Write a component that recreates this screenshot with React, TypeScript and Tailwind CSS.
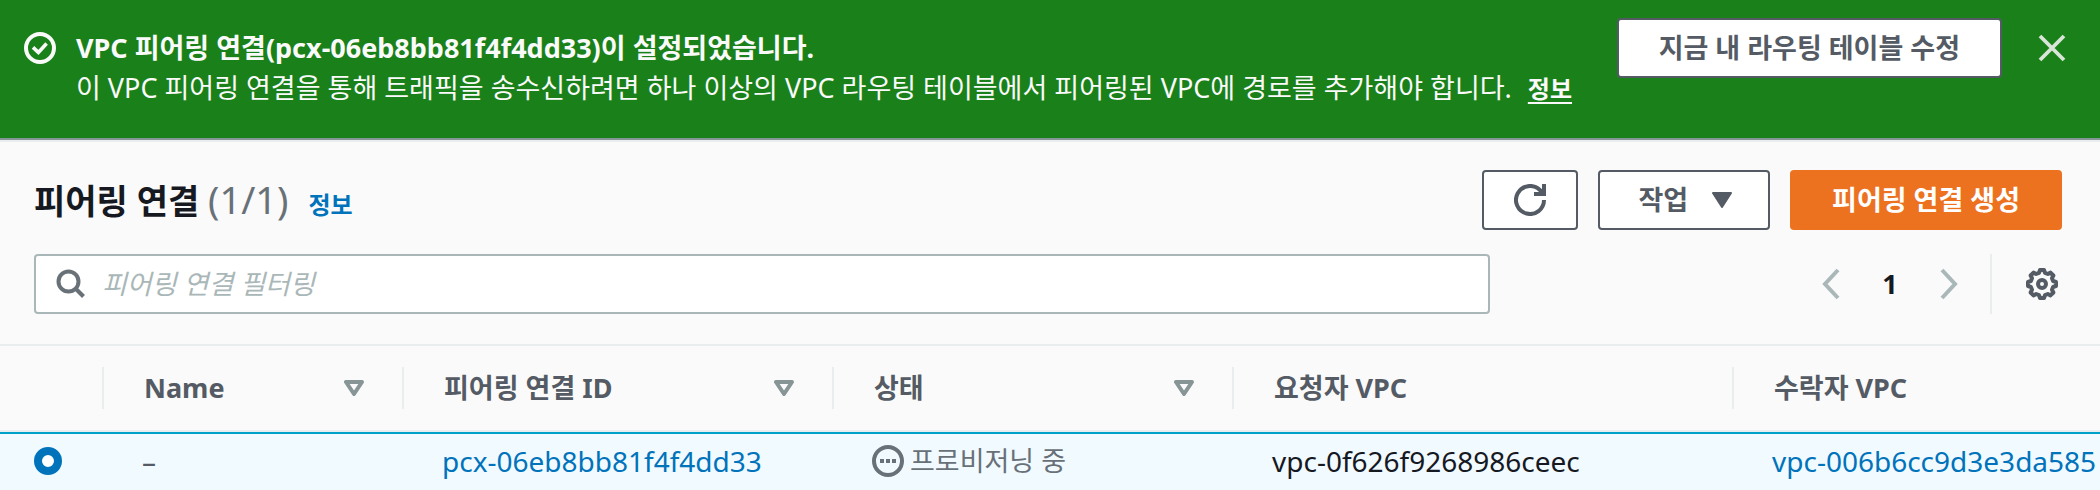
import { useState } from 'react';

const columns = [
    { label: 'Name', sortable: true },
    { label: '피어링 연결 ID', sortable: true },
    { label: '상태', sortable: true },
    { label: '요청자 VPC', sortable: false },
    { label: '수락자 VPC', sortable: false },
];

const peerings = [
    {
        id: 'pcx-06eb8bb81f4f4dd33',
        name: '–',
        status: '프로비저닝 중',
        requester: 'vpc-0f626f9268986ceec',
        accepter: 'vpc-006b6cc9d3e3da585',
    },
];

function CheckCircleIcon() {
    return (
        <svg viewBox="0 0 16 16" className="size-8 shrink-0" fill="none" stroke="currentColor" strokeWidth="2">
            <circle cx="8" cy="8" r="7" />
            <path d="M4.5 7.7 7.2 10.2 11.3 5.8" strokeWidth="1.8" />
        </svg>
    );
}

function CloseIcon() {
    return (
        <svg viewBox="0 0 16 16" className="size-8" fill="none" stroke="currentColor" strokeWidth="1.9">
            <path d="m2 2 12 12M14 2 2 14" />
        </svg>
    );
}

function RefreshIcon() {
    return (
        <svg viewBox="0 0 16 16" className="size-8" fill="none" stroke="currentColor" strokeWidth="2">
            <path d="M10 5h5V0" />
            <path d="M15 8a7 7 0 1 1-2.2-5.1L14.5 4.5" />
        </svg>
    );
}

function CaretIcon() {
    return (
        <svg viewBox="0 0 20 16" className="h-4 w-5" fill="currentColor" stroke="currentColor" strokeWidth="2" strokeLinejoin="round">
            <path d="M1 1h18l-9 14z" />
        </svg>
    );
}

function SortIcon() {
    return (
        <svg viewBox="0 0 20 16" className="h-4 w-5" fill="none" stroke="currentColor" strokeWidth="4" strokeLinejoin="round">
            <path d="M2 2h16l-8 12z" />
        </svg>
    );
}

function SearchIcon() {
    return (
        <svg viewBox="0 0 30 30" className="size-[30px] shrink-0" fill="none" stroke="currentColor" strokeWidth="4">
            <circle cx="12.5" cy="12.5" r="10" />
            <path d="m19.5 19.5 8 8" />
        </svg>
    );
}

function ChevronIcon({ direction }: { direction: 'left' | 'right' }) {
    return (
        <svg viewBox="0 0 18 32" className="h-8 w-[18px]" fill="none" stroke="currentColor" strokeWidth="4">
            <path d={direction === 'left' ? 'M16 2 3 16l13 14' : 'm2 2 13 14L2 30'} />
        </svg>
    );
}

function GearIcon() {
    return (
        <svg viewBox="0 0 32 32" className="size-8" fill="none" stroke="currentColor" strokeWidth="4" strokeLinejoin="round">
            <path d="M14 2h4l1 2.9 2.8 1.1 2.7-1.4 2.9 2.9-1.4 2.7 1.1 2.8 2.9 1v4l-2.9 1-1.1 2.8 1.4 2.7-2.9 2.9-2.7-1.4-2.8 1.1-1 2.9h-4l-1-2.9-2.8-1.1-2.7 1.4-2.9-2.9 1.4-2.7-1.1-2.8-2.9-1v-4l2.9-1 1.1-2.8-1.4-2.7 2.9-2.9 2.7 1.4 2.8-1.1z" />
            <circle cx="16" cy="16" r="4" />
        </svg>
    );
}

function PendingIcon() {
    return (
        <svg viewBox="0 0 32 32" className="size-8 shrink-0" fill="none" stroke="currentColor" strokeWidth="4">
            <circle cx="16" cy="16" r="14" />
            <path d="M8 16h4m2 0h4m2 0h4" />
        </svg>
    );
}

function SuccessBanner({ onClose }: { onClose: () => void }) {
    return (
        <div className="flex items-start bg-[#1a811a] px-6 pt-[18px] pb-[30px] text-[#fafafa]" role="status">
            <div className="flex flex-1 gap-5 pt-[10px]">
                <div className="pt-1"><CheckCircleIcon /></div>
                <div className="text-[27px] leading-10">
                    <p className="h-10 font-bold">VPC 피어링 연결(pcx-06eb8bb81f4f4dd33)이 설정되었습니다.</p>
                    <p className="h-10">
                        이 VPC 피어링 연결을 통해 트래픽을 송수신하려면 하나 이상의 VPC 라우팅 테이블에서 피어링된 VPC에 경로를 추가해야 합니다.
                        <a href="#info" className="ml-4 text-[24px] font-bold underline underline-offset-4">정보</a>
                    </p>
                </div>
            </div>
            <button type="button" className="h-[60px] rounded-sm border-2 border-[#545b64] bg-white px-10 text-[27px] font-bold text-[#545b64]">
                지금 내 라우팅 테이블 수정
            </button>
            <button type="button" aria-label="닫기" onClick={onClose} className="ml-[34px] mr-2 flex h-[60px] items-center text-[#d9e5d9]">
                <CloseIcon />
            </button>
        </div>
    );
}

export default function App() {
    const [bannerOpen, setBannerOpen] = useState(true);
    const [filter, setFilter] = useState('');
    const [selected, setSelected] = useState('pcx-06eb8bb81f4f4dd33');

    const rows = peerings.filter(p => p.id.includes(filter));

    return (
        <div className="bg-[#fafafa] font-['Noto_Sans','Noto_Sans_CJK_KR',sans-serif] text-[#16191f]">
            {bannerOpen && <SuccessBanner onClose={() => setBannerOpen(false)} />}

            <main className="border-t-2 border-[#879596]">
                <div className="border-t-2 border-[#eaeded] pt-7 pr-[38px] pb-[30px] pl-[34px]">
                    <div className="flex h-[60px] items-center gap-5">
                        <div className="flex flex-1 items-baseline">
                            <h1 className="text-[34px] leading-[60px] font-bold">
                                피어링 연결 <span className="text-[38px] font-normal text-[#687078]">(1/1)</span>
                            </h1>
                            <a href="#info" className="ml-5 text-[24px] font-bold text-[#0073bb]">정보</a>
                        </div>
                        <button type="button" aria-label="새로 고침" className="flex h-[60px] w-24 items-center justify-center rounded-sm border-2 border-[#545b64] bg-white text-[#545b64]">
                            <RefreshIcon />
                        </button>
                        <button type="button" className="flex h-[60px] items-center gap-6 rounded-sm border-2 border-[#545b64] bg-white pr-9 pl-[38px] text-[27px] font-bold text-[#545b64]">
                            작업 <CaretIcon />
                        </button>
                        <button type="button" className="h-[60px] rounded-sm bg-[#ec7220] px-[42px] text-[27px] font-bold text-white">
                            피어링 연결 생성
                        </button>
                    </div>

                    <div className="mt-6 flex items-center justify-between">
                        <label className="flex h-[60px] w-[71.8%] items-center gap-4 rounded-sm border-2 border-[#aab7b8] bg-white pl-5 text-[#687078]">
                            <SearchIcon />
                            <input
                                type="text"
                                aria-label="피어링 연결 필터링"
                                placeholder="피어링 연결 필터링"
                                value={filter}
                                onChange={e => setFilter(e.target.value)}
                                className="min-w-0 flex-1 bg-transparent text-[27px] text-[#16191f] outline-none placeholder:text-[#aab7b8] placeholder:italic"
                            />
                        </label>
                        <div className="flex items-center">
                            <nav className="flex items-center text-[#aab7b8]" aria-label="페이지">
                                <button type="button" aria-label="이전 페이지"><ChevronIcon direction="left" /></button>
                                <button type="button" className="w-[100px] text-[27px] font-bold text-[#16191f]">1</button>
                                <button type="button" aria-label="다음 페이지"><ChevronIcon direction="right" /></button>
                            </nav>
                            <div className="ml-8 flex h-[60px] items-center border-l-2 border-[#eaeded] pr-1 pl-[34px]">
                                <button type="button" aria-label="기본 설정" className="text-[#545b64]"><GearIcon /></button>
                            </div>
                        </div>
                    </div>
                </div>

                <table className="w-full table-fixed border-separate border-spacing-0 text-left whitespace-nowrap">
                    <colgroup>
                        <col className="w-[102px]" />
                        <col className="w-[300px]" />
                        <col className="w-[430px]" />
                        <col className="w-[400px]" />
                        <col className="w-[500px]" />
                        <col />
                    </colgroup>
                    <thead className="text-[27px] text-[#545b64]">
                        <tr>
                            <th aria-label="선택" className="border-y-2 border-[#eaeded]" />
                            {columns.map(c => (
                                <th key={c.label} className="border-y-2 border-[#eaeded] p-0 py-[21px]">
                                    <div className="flex h-[42px] items-center justify-between border-l-2 border-[#eaeded] pr-[38px] pl-10">
                                        {c.label}
                                        {c.sortable && (
                                            <button type="button" aria-label={`${c.label} 정렬`} className="text-[#879596]"><SortIcon /></button>
                                        )}
                                    </div>
                                </th>
                            ))}
                        </tr>
                    </thead>
                    <tbody>
                        {rows.map(p => (
                            <tr key={p.id} className="h-[58px] bg-[#f1faff] text-[28px] leading-8 *:border-t-2 *:border-[#00a1c9] *:pb-0.5">
                                <td className="pl-[34px]">
                                    <input
                                        type="radio"
                                        name="peering"
                                        aria-label={p.id}
                                        checked={selected === p.id}
                                        onChange={() => setSelected(p.id)}
                                        className="block size-7 appearance-none rounded-full border-2 border-[#aab7b8] bg-white checked:border-8 checked:border-[#0073bb]"
                                    />
                                </td>
                                <td className="pl-10 text-[#545b64]">{p.name}</td>
                                <td className="pl-10"><a href="#pcx" className="text-[#0073bb]">{p.id}</a></td>
                                <td className="pl-10">
                                    <span className="flex items-center gap-1.5 text-[27px] text-[#687078]"><PendingIcon />{p.status}</span>
                                </td>
                                <td className="pl-10">{p.requester}</td>
                                <td className="pl-10"><a href="#vpc" className="text-[#0073bb]">{p.accepter}</a></td>
                            </tr>
                        ))}
                    </tbody>
                </table>
            </main>
        </div>
    );
}
